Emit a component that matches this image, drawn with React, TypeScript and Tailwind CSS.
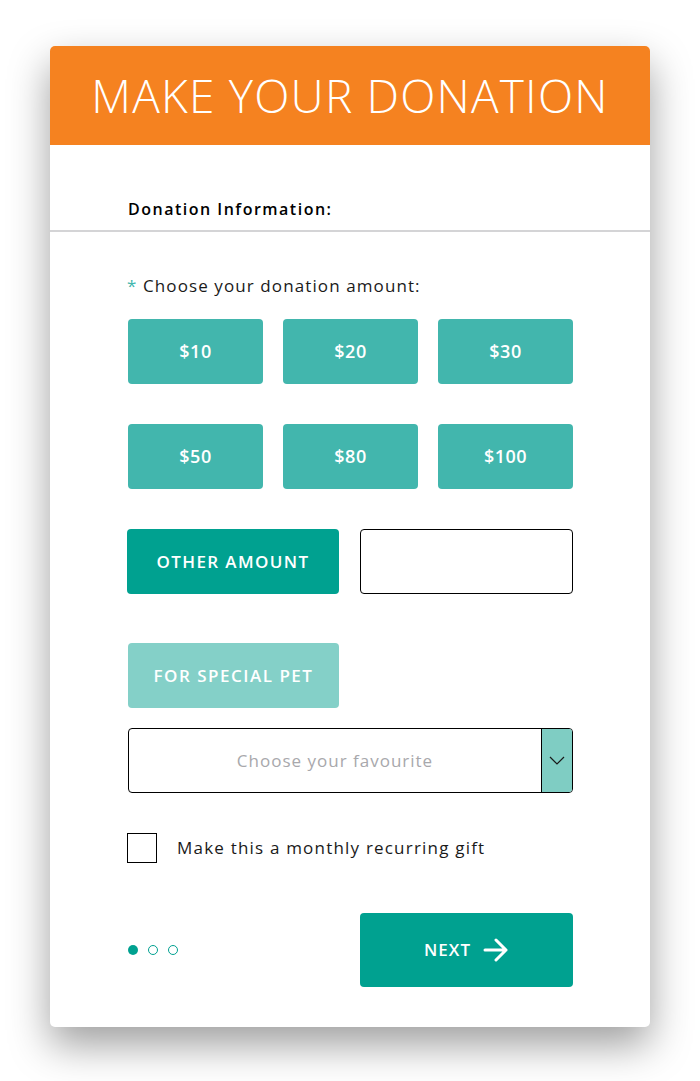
import { useState } from 'react'

const amounts = ['$10', '$20', '$30', '$50', '$80', '$100']

const font = { fontFamily: '"Open Sans", "Liberation Sans", sans-serif' }

export default function App() {
  const [step] = useState(0)

  return (
    <div className="min-h-[1081px] w-[700px] bg-white pt-[46px]" style={font}>
      <div className="mx-auto w-[600px] overflow-hidden rounded-[5px] bg-white shadow-[0_18px_40px_rgba(0,0,0,0.38)]">
        <div className="flex h-[99px] items-center justify-center bg-[#f58220]">
          <h1 className="text-[46px] font-light tracking-[1.2px] text-white">MAKE YOUR DONATION</h1>
        </div>

        <div className="px-[78px] pt-[52px] pb-[9px]">
          <p className="text-[16px] leading-6 font-semibold tracking-[1.5px] text-black">Donation Information:</p>
        </div>
        <div className="h-[2px] bg-[#d4d4d6]" />

        <div className="px-[77px] pt-[42px] pb-[40px]">
          <p className="text-[17px] leading-6 tracking-[1.1px] text-[#1a1a1a]">
            <span className="text-[#42b6ad]">*</span> Choose your donation amount:
          </p>

          <div className="mt-[21px] grid grid-cols-3 gap-x-5 gap-y-[40px] pl-px">
            {amounts.map((a) => (
              <button
                key={a}
                className="flex h-[65px] items-center justify-center rounded-[4px] bg-[#42b6ad] text-[18px] font-semibold tracking-[0.5px] text-white"
              >
                {a}
              </button>
            ))}
          </div>

          <div className="mt-[40px] flex gap-[21px]">
            <button className="flex h-[65px] w-[212px] items-center justify-center rounded-[4px] bg-[#00a190] text-[17px] font-semibold tracking-[1.4px] text-white">
              OTHER AMOUNT
            </button>
            <input className="h-[65px] w-[213px] rounded-[4px] border border-black px-3 outline-none" />
          </div>

          <button className="mt-[49px] ml-px flex h-[65px] w-[211px] items-center justify-center rounded-[4px] bg-[#84d0c8] text-[17px] font-semibold tracking-[1.5px] text-white">
            FOR SPECIAL PET
          </button>

          <div className="mt-[20px] ml-px flex h-[65px] overflow-hidden rounded-[4px] border border-black">
            <div className="flex flex-1 items-center justify-center text-[17px] tracking-[1px] text-[#a8a8ac]">
              Choose your favourite
            </div>
            <div className="flex w-[31px] items-center justify-center border-l border-black bg-[#7fcdc3]">
              <svg width="16" height="9" viewBox="0 0 16 9" fill="none">
                <path d="M1 1l7 7 7-7" stroke="#1a1a1a" strokeWidth="1.2" />
              </svg>
            </div>
          </div>

          <label className="mt-[40px] flex items-center gap-5">
            <span className="h-[30px] w-[30px] border border-black" />
            <span className="text-[17px] tracking-[1.2px] text-[#1a1a1a]">Make this a monthly recurring gift</span>
          </label>

          <div className="mt-[50px] flex items-center justify-between">
            <div className="flex items-center gap-[10px] pl-px">
              {[0, 1, 2].map((i) => (
                <span
                  key={i}
                  className={
                    i === step
                      ? 'h-[10px] w-[10px] rounded-full bg-[#00a190]'
                      : 'h-[10px] w-[10px] rounded-full border border-[#00a190]'
                  }
                />
              ))}
            </div>
            <button className="flex h-[74px] w-[213px] items-center justify-center gap-3 rounded-[4px] bg-[#00a190] text-[17px] font-semibold tracking-[1px] text-white">
              NEXT
              <svg width="26" height="24" viewBox="0 0 26 24" fill="none">
                <path d="M2 12h21M13 2l10 10-10 10" stroke="white" strokeWidth="3" strokeLinecap="round" strokeLinejoin="round" />
              </svg>
            </button>
          </div>
        </div>
      </div>
    </div>
  )
}
